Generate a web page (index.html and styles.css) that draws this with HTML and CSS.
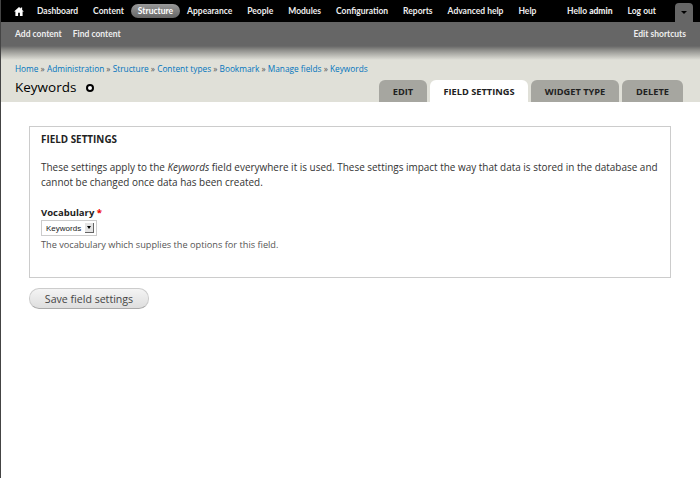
FILE: index.html
```html
<!DOCTYPE html>
<html lang="en">
<head>
  <meta charset="UTF-8" />
  <title>Keywords</title>
  <link rel="stylesheet" href="styles.css">
</head>
<body>
  <div class="toolbar">
    <nav class="toolbar-menu">
      <a class="home" href="#" aria-label="Home">
        <svg width="10" height="9" viewBox="0 0 11 10"><path d="M5.5 0 L7.5 1.8 L7.5 .6 L9 .6 L9 3.2 L11 5 L9.5 5 L9.5 10 L6.5 10 L6.5 6.5 L4.5 6.5 L4.5 10 L1.5 10 L1.5 5 L0 5 Z" fill="#fff"/></svg>
      </a>
      <a href="#">Dashboard</a>
      <a href="#">Content</a>
      <a class="active" href="#">Structure</a>
      <a href="#">Appearance</a>
      <a href="#">People</a>
      <a href="#">Modules</a>
      <a href="#">Configuration</a>
      <a href="#">Reports</a>
      <a href="#">Advanced help</a>
      <a href="#">Help</a>
    </nav>
    <div class="toolbar-user">
      <span>Hello <b>admin</b></span>
      <a href="#">Log out</a>
      <div class="drawer-toggle"><span class="arrow"></span></div>
    </div>
  </div>

  <div class="shortcuts">
    <div class="shortcut-links">
      <a href="#">Add content</a>
      <a href="#">Find content</a>
    </div>
    <a href="#">Edit shortcuts</a>
  </div>

  <header class="page-head">
    <div class="breadcrumb">
      <a href="#">Home</a> » <a href="#">Administration</a> » <a href="#">Structure</a> » <a href="#">Content types</a> » <a href="#">Bookmark</a> » <a href="#">Manage fields</a> » <a href="#">Keywords</a>
    </div>
    <div class="title-row">
      <div class="title">
        <h1>Keywords</h1>
        <span class="add-shortcut"></span>
      </div>
      <ul class="tabs">
        <li class="tab-edit">Edit</li>
        <li class="tab-settings active">Field settings</li>
        <li class="tab-widget">Widget type</li>
        <li class="tab-delete">Delete</li>
      </ul>
    </div>
  </header>

  <main class="content">
    <section class="fieldset">
      <h2>Field settings</h2>
      <p>These settings apply to the <em>Keywords</em> field everywhere it is used. These settings impact the way that data is stored in the database and cannot be changed once data has been created.</p>
      <label class="field-label">Vocabulary <span class="required">*</span></label>
      <div class="select">Keywords <span class="select-btn"><span class="arrow"></span></span></div>
      <div class="description">The vocabulary which supplies the options for this field.</div>
    </section>
    <button class="save">Save field settings</button>
  </main>
</body>
</html>
```

FILE: styles.css
```css
* { margin: 0; padding: 0; box-sizing: border-box; }

html, body {
  height: 100%;
}

body {
  font-family: "Open Sans", sans-serif;
  font-size: 9.95px;
  background: #fff;
  color: #333;
  border-left: 1px solid #444;
  overflow: hidden;
}

a {
  text-decoration: none;
  color: inherit;
}

.toolbar {
  height: 22px;
  background: #000;
  color: #eee;
  font-family: Lato, sans-serif;
  font-size: 8.5px;
  font-weight: 700;
  white-space: nowrap;
  display: flex;
  justify-content: space-between;
  align-items: center;
}

.toolbar-menu {
  display: flex;
  align-items: center;
  gap: 15px;
  padding-left: 13px;
}

.toolbar-menu .home {
  display: flex;
  margin-right: -2px;
}

.toolbar-menu .active {
  background: linear-gradient(#999, #666);
  border-radius: 8px;
  padding: 2px 7px;
  margin: 0 -8px;
  color: #fff;
}

.toolbar-user {
  display: flex;
  align-items: center;
  gap: 15px;
  padding-right: 7px;
}

.toolbar-user b {
  font-weight: 900;
}

.toolbar-user .drawer-toggle {
  margin-left: 4px;
}

.drawer-toggle {
  width: 18px;
  height: 19px;
  margin-top: 3px;
  background: #666;
  border-radius: 4px 4px 0 0;
  display: flex;
  justify-content: center;
  align-items: center;
}

.arrow {
  width: 0;
  height: 0;
  border: 3px solid transparent;
  border-top: 3px solid #000;
  border-bottom: 0;
}

.shortcuts {
  height: 38px;
  background: linear-gradient(#666 0, #666 24px, #8e8e8a 28px, #e0e0d8 38px);
  color: #eee;
  font-family: Lato, sans-serif;
  font-size: 8.5px;
  font-weight: 700;
  display: flex;
  justify-content: space-between;
  padding: 7px 14px 0 14px;
}

.shortcut-links {
  display: flex;
  gap: 11px;
}

.page-head {
  height: 42px;
  background: #e0e0d8;
  padding-top: 3px;
  padding-left: 14px;
  display: flex;
  flex-direction: column;
}

.breadcrumb {
  height: 11px;
  font-size: 8.3px;
  color: #555;
  white-space: nowrap;
}

.breadcrumb a {
  color: #0074bd;
}

.title-row {
  flex: 1;
  display: flex;
  justify-content: space-between;
  align-items: flex-end;
}

.title {
  align-self: flex-start;
  display: flex;
  align-items: center;
  gap: 10px;
  padding-top: 4px;
}

h1 {
  font-size: 13.5px;
  line-height: 18px;
  font-weight: normal;
  color: #000;
}

.add-shortcut {
  width: 8px;
  height: 8px;
  margin-top: 2px;
  border: 2px solid #000;
  border-radius: 50%;
  background: #fff;
}

.tabs {
  display: flex;
  list-style: none;
  gap: 3px;
  padding-right: 17px;
}

.tabs li {
  height: 22px;
  background: #a6a6a0;
  border-radius: 6px 6px 0 0;
  font-size: 9.25px;
  font-weight: 700;
  color: #222;
  text-transform: uppercase;
  text-align: center;
  white-space: nowrap;
  line-height: 23px;
}

.tabs .tab-edit { width: 48px; }
.tabs .tab-settings { width: 98px; }
.tabs .tab-widget { width: 88px; }
.tabs .tab-delete { width: 61px; }

.tabs li.active {
  background: #fff;
}

.content {
  padding: 24px 29px 0 28px;
}

.fieldset {
  height: 152px;
  border: 1px solid #ccc;
  padding: 6px 5px 0 11px;
}

h2 {
  font-size: 9.9px;
  line-height: 13px;
  font-weight: 700;
  color: #222;
  text-transform: uppercase;
  margin-bottom: 14px;
}

.fieldset p {
  line-height: 15px;
  color: #333;
  margin-bottom: 16px;
}

.field-label {
  display: block;
  font-size: 9.5px;
  line-height: 13px;
  font-weight: 700;
  color: #222;
}

.required {
  color: #e00;
}

.select {
  display: flex;
  align-items: center;
  justify-content: space-between;
  width: 56px;
  height: 16px;
  margin-top: 1px;
  border: 1px solid #ccc;
  padding: 0 2px 0 4px;
  font-family: "Liberation Sans", sans-serif;
  font-size: 8px;
  color: #222;
}

.select-btn {
  width: 9px;
  height: 10px;
  background: #e4e4e4;
  border-right: 1px solid #666;
  border-bottom: 1px solid #666;
  display: flex;
  justify-content: center;
  align-items: center;
}

.select-btn .arrow {
  border-width: 2px;
  border-top-width: 3px;
  border-bottom: 0;
}

.description {
  font-size: 9.2px;
  color: #555;
  margin-top: 2px;
}

.save {
  display: block;
  margin-top: 10px;
  width: 120px;
  height: 21px;
  border: 1px solid #ccc;
  border-bottom-color: #aaa;
  border-radius: 10px;
  background: linear-gradient(#f4f4f4, #dedede);
  font-family: "Open Sans", sans-serif;
  font-size: 10.6px;
  color: #444;
}
```
